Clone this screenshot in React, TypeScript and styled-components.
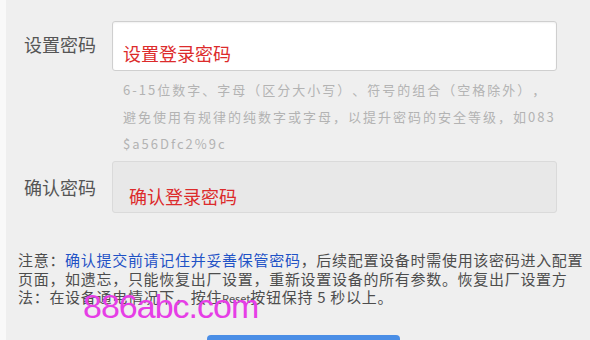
import styled, { createGlobalStyle } from "styled-components";

const GlobalStyle = createGlobalStyle`
  html, body {
    margin: 0;
    padding: 0;
    background: #efefef;
  }
  body {
    font-family: "Noto Sans CJK SC", "Noto Sans", sans-serif;
    text-spacing-trim: space-all;
  }
`;

const Page = styled.div`
  position: relative;
  height: 340px;
  overflow: hidden;
  box-sizing: border-box;
  border-left: 6px solid #f9f9f9;
  padding: 21px 0 0 12px;
`;

const Row = styled.div`
  display: flex;
  align-items: flex-start;
`;

const Label = styled.div<{ offset: number }>`
  width: 88px;
  padding-left: 6px;
  margin-top: ${({ offset }) => offset}px;
  font-size: 18px;
  line-height: 24px;
  color: #555;
  white-space: nowrap;
`;

const Field = styled.input<{ disabledLook?: boolean }>`
  box-sizing: border-box;
  width: 445px;
  height: ${({ disabledLook }) => (disabledLook ? "52px" : "50px")};
  margin: 0;
  padding: ${({ disabledLook }) => (disabledLook ? "18px 0 0 16px" : "14px 0 0 10px")};
  border: 1px solid ${({ disabledLook }) => (disabledLook ? "#dadada" : "#cfcfcf")};
  border-radius: 3px;
  background: ${({ disabledLook }) => (disabledLook ? "#e8e8e8" : "#fff")};
  box-shadow: ${({ disabledLook }) =>
    disabledLook ? "none" : "inset 0 1px 2px rgba(0, 0, 0, 0.06)"};
  font-family: inherit;
  font-size: 18px;
  outline: none;

  &::placeholder {
    color: #dc2b2b;
    opacity: 1;
  }
`;

const Hint = styled.div`
  margin: 5px 0 4px 105px;
  font-size: 13px;
  line-height: 27px;
  letter-spacing: 2px;
  color: #b3b3b3;
  white-space: nowrap;
`;

const Note = styled.div`
  margin-top: 38px;
  font-size: 15px;
  line-height: 18.5px;
  letter-spacing: 0.7px;
  color: #4d4d4d;
  white-space: nowrap;
`;

const Strong = styled.span`
  color: #1f52c6;
`;

const Small = styled.span`
  font-size: 11px;
  letter-spacing: 0;
`;

const SubmitButton = styled.button`
  display: block;
  width: 193px;
  height: 40px;
  margin: 27px 0 0 189px;
  border: none;
  border-radius: 4px;
  background: #4a8ee6;
`;

const Watermark = styled.div`
  position: absolute;
  left: 77px;
  top: 287px;
  font-family: "Liberation Sans", Arial, sans-serif;
  font-size: 34px;
  letter-spacing: -1px;
  color: #e63ee6;
  pointer-events: none;
`;

export default function App() {
  return (
    <>
      <GlobalStyle />
      <Page>
        <Row>
          <Label offset={11}>设置密码</Label>
          <Field type="password" placeholder="设置登录密码" />
        </Row>
        <Hint>
          6-15位数字、字母（区分大小写）、符号的组合（空格除外），
          <br />
          避免使用有规律的纯数字或字母，以提升密码的安全等级，如083
          <br />
          $a56Dfc2%9c
        </Hint>
        <Row>
          <Label offset={14}>确认密码</Label>
          <Field type="password" placeholder="确认登录密码" disabledLook />
        </Row>
        <Note>
          注意：<Strong>确认提交前请记住并妥善保管密码</Strong>，后续配置设备时需使用该密码进入配置
          <br />
          页面，如遗忘，只能恢复出厂设置，重新设置设备的所有参数。恢复出厂设置方
          <br />
          法：在设备通电情况下，按住<Small>Reset</Small>按钮保持 5 秒以上。
        </Note>
        <SubmitButton />
        <Watermark>886abc.com</Watermark>
      </Page>
    </>
  );
}
